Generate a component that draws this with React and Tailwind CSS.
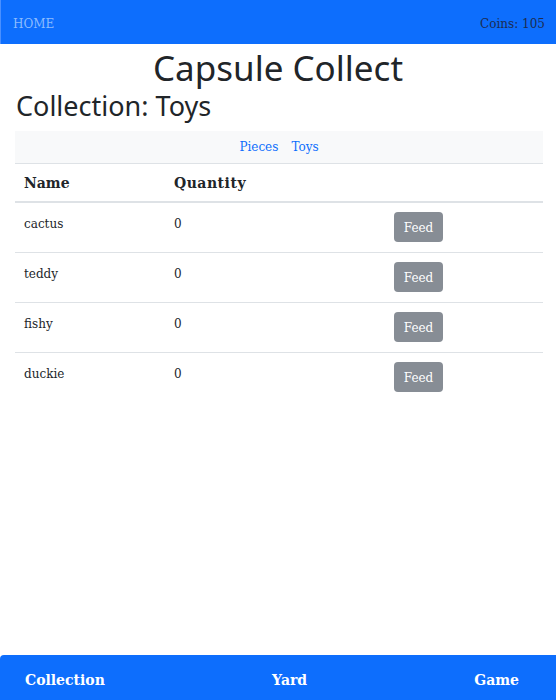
import React from "react";

const serif = { fontFamily: '"DejaVu Serif", serif' };
const sans = { fontFamily: '"Noto Sans", sans-serif' };

const rows = ["cactus", "teddy", "fishy", "duckie"];

export default function App() {
  return (
    <div className="w-[556px] h-[700px] bg-white flex flex-col text-[#212529]" style={serif}>
      <div className="h-[44px] bg-[#0d6efd] flex items-center justify-between pl-[12px] pr-[11px] pt-[3px] border-l border-[#4a90ff]">
        <span className="text-[12px] text-[#8cbcff]">HOME</span>
        <span className="text-[12px] text-[#1c2c52]">Coins: 105</span>
      </div>
      <h1 className="text-center text-[35px] leading-[43px] mt-[2px] font-normal" style={sans}>Capsule Collect</h1>
      <h2 className="text-[27px] leading-[34px] pl-[16px] font-normal" style={sans}>Collection: Toys</h2>
      <div className="ml-[15px] mr-[13px] mt-[8px] flex flex-col">
        <div className="h-[33px] bg-[#f8f9fa] border-b border-[#dee2e6] flex items-center justify-center gap-[13px] text-[12px] text-[#0d6efd]">
          <span>Pieces</span>
          <span>Toys</span>
        </div>
        <div className="h-[39px] flex items-center pt-[2px] border-b-2 border-[#dee2e6] text-[14px] font-bold">
          <span className="w-[159px] pl-[9px]">Name</span>
          <span className="tracking-[0.5px]">Quantity</span>
        </div>
        {rows.map((r) => (
          <div key={r} className="h-[50px] flex items-start border-b border-[#dee2e6] last:border-b-0 text-[12px]">
            <span className="w-[159px] pl-[9px] pt-[12px]">{r}</span>
            <span className="w-[220px] pt-[12px]">0</span>
            <button className="mt-[9px] w-[49px] h-[30px] rounded-[4px] bg-[#878d95] text-white text-[12px] flex items-center justify-center pt-[2px]">Feed</button>
          </div>
        ))}
      </div>
      <div className="flex-1" />
      <div className="h-[45px] bg-[#0d6efd] rounded-tl-[4px] flex items-center justify-between pl-[25px] pr-[37px] pt-[5px] text-white text-[14px] font-bold">
        <span>Collection</span>
        <span>Yard</span>
        <span>Game</span>
      </div>
    </div>
  );
}
